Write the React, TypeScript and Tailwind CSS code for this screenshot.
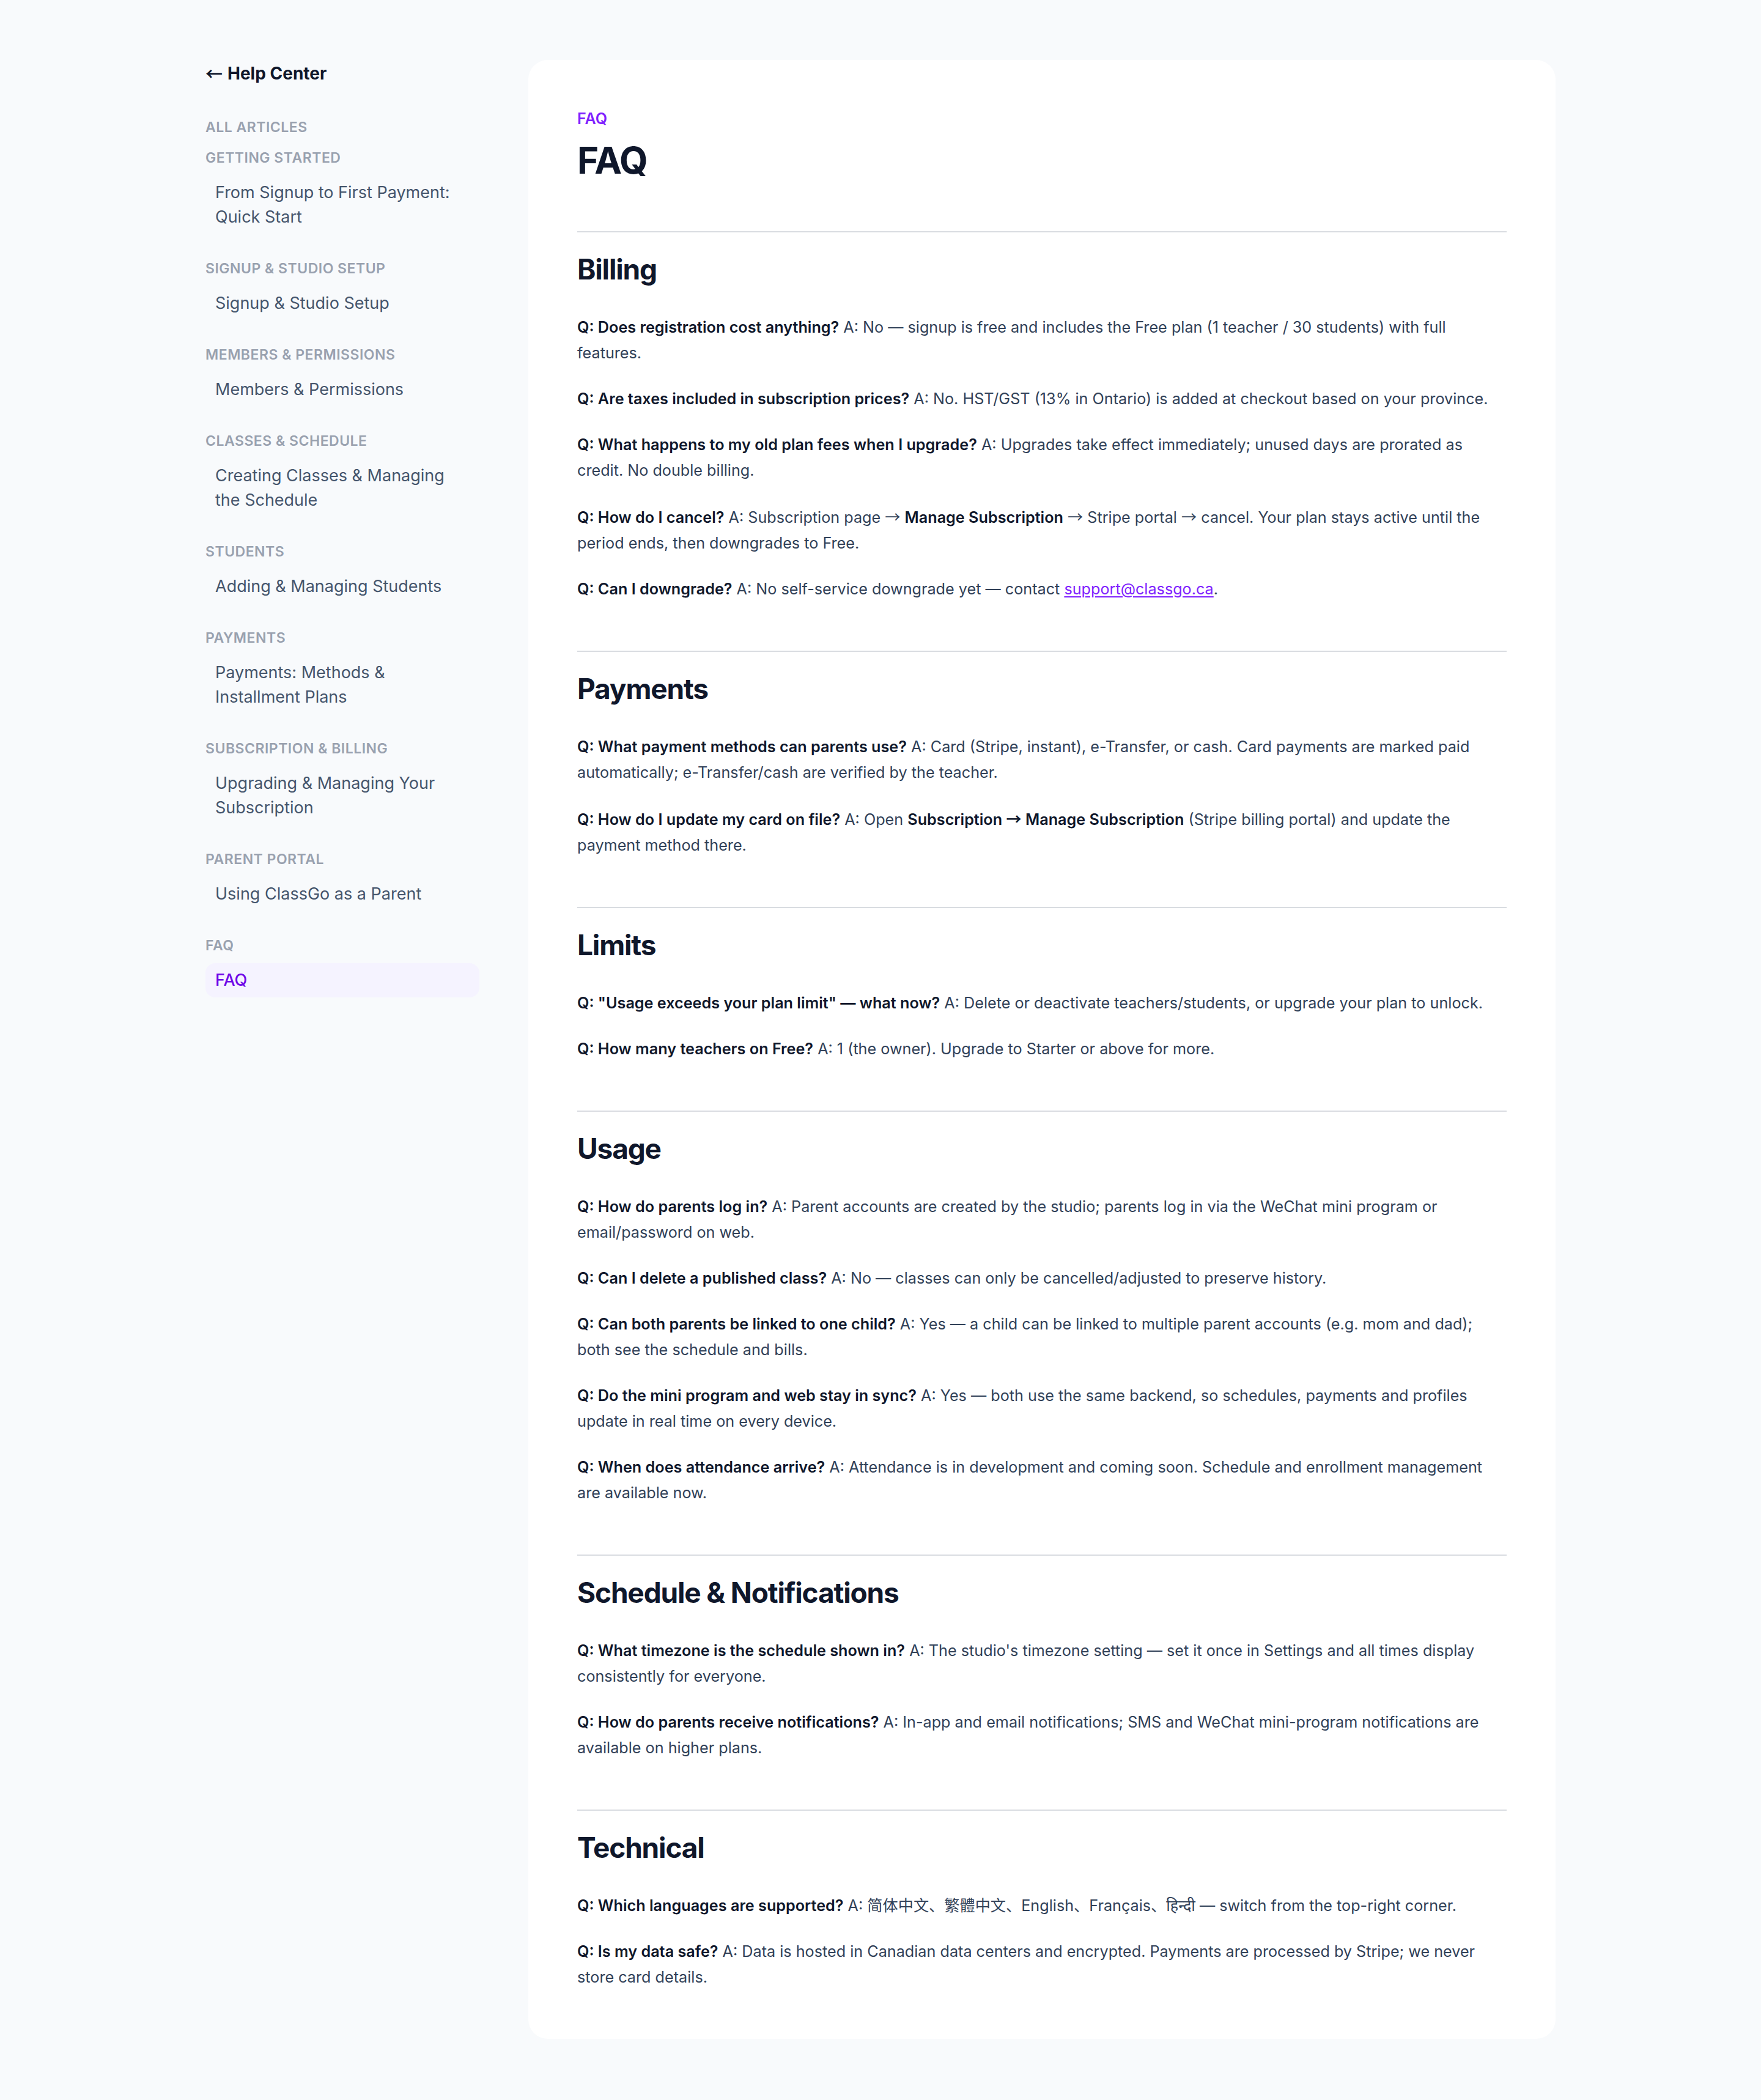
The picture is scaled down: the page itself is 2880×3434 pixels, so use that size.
import type { ReactNode } from 'react'

type Faq = { q: string; a: ReactNode }
type Section = { title: string; items: Faq[] }

const NAV = [
  { group: 'Getting Started', items: ['From Signup to First Payment: Quick Start'] },
  { group: 'Signup & Studio Setup', items: ['Signup & Studio Setup'] },
  { group: 'Members & Permissions', items: ['Members & Permissions'] },
  { group: 'Classes & Schedule', items: ['Creating Classes & Managing the Schedule'] },
  { group: 'Students', items: ['Adding & Managing Students'] },
  { group: 'Payments', items: ['Payments: Methods & Installment Plans'] },
  { group: 'Subscription & Billing', items: ['Upgrading & Managing Your Subscription'] },
  { group: 'Parent Portal', items: ['Using ClassGo as a Parent'] },
  { group: 'FAQ', items: ['FAQ'] },
]

const B = ({ children }: { children: ReactNode }) => (
  <strong className="font-semibold text-slate-900">{children}</strong>
)

// long thin arrow, as in the original
const Arrow = ({ left = false }: { left?: boolean }) => (
  <span className="font-['Noto_Sans_CJK_SC',sans-serif]">{left ? '←' : '→'}</span>
)

const SECTIONS: Section[] = [
  {
    title: 'Billing',
    items: [
      {
        q: 'Does registration cost anything?',
        a: 'No — signup is free and includes the Free plan (1 teacher / 30 students) with full features.',
      },
      {
        q: 'Are taxes included in subscription prices?',
        a: 'No. HST/GST (13% in Ontario) is added at checkout based on your province.',
      },
      {
        q: 'What happens to my old plan fees when I upgrade?',
        a: 'Upgrades take effect immediately; unused days are prorated as credit. No double billing.',
      },
      {
        q: 'How do I cancel?',
        a: (
          <>
            Subscription page <Arrow /> <B>Manage Subscription</B> <Arrow /> Stripe portal <Arrow /> cancel.
            Your plan stays active until the period ends, then downgrades to Free.
          </>
        ),
      },
      {
        q: 'Can I downgrade?',
        a: (
          <>
            No self-service downgrade yet — contact{' '}
            <a href="#" className="text-violet-600 underline underline-offset-[3px]">
              support@classgo.ca
            </a>
            .
          </>
        ),
      },
    ],
  },
  {
    title: 'Payments',
    items: [
      {
        q: 'What payment methods can parents use?',
        a: 'Card (Stripe, instant), e-Transfer, or cash. Card payments are marked paid automatically; e-Transfer/cash are verified by the teacher.',
      },
      {
        q: 'How do I update my card on file?',
        a: (
          <>
            Open{' '}
            <B>
              Subscription <Arrow /> Manage Subscription
            </B>{' '}
            (Stripe billing portal) and update the payment method there.
          </>
        ),
      },
    ],
  },
  {
    title: 'Limits',
    items: [
      {
        q: '"Usage exceeds your plan limit" — what now?',
        a: 'Delete or deactivate teachers/students, or upgrade your plan to unlock.',
      },
      {
        q: 'How many teachers on Free?',
        a: '1 (the owner). Upgrade to Starter or above for more.',
      },
    ],
  },
  {
    title: 'Usage',
    items: [
      {
        q: 'How do parents log in?',
        a: 'Parent accounts are created by the studio; parents log in via the WeChat mini program or email/password on web.',
      },
      {
        q: 'Can I delete a published class?',
        a: 'No — classes can only be cancelled/adjusted to preserve history.',
      },
      {
        q: 'Can both parents be linked to one child?',
        a: 'Yes — a child can be linked to multiple parent accounts (e.g. mom and dad); both see the schedule and bills.',
      },
      {
        q: 'Do the mini program and web stay in sync?',
        a: 'Yes — both use the same backend, so schedules, payments and profiles update in real time on every device.',
      },
      {
        q: 'When does attendance arrive?',
        a: 'Attendance is in development and coming soon. Schedule and enrollment management are available now.',
      },
    ],
  },
  {
    title: 'Schedule & Notifications',
    items: [
      {
        q: 'What timezone is the schedule shown in?',
        a: "The studio's timezone setting — set it once in Settings and all times display consistently for everyone.",
      },
      {
        q: 'How do parents receive notifications?',
        a: 'In-app and email notifications; SMS and WeChat mini-program notifications are available on higher plans.',
      },
    ],
  },
  {
    title: 'Technical',
    items: [
      {
        q: 'Which languages are supported?',
        a: '简体中文、繁體中文、English、Français、हिन्दी — switch from the top-right corner.',
      },
      {
        q: 'Is my data safe?',
        a: 'Data is hosted in Canadian data centers and encrypted. Payments are processed by Stripe; we never store card details.',
      },
    ],
  },
]

function Sidebar() {
  return (
    <aside className="w-[448px] shrink-0">
      <a href="#" className="flex items-center gap-2 text-[28px] leading-[48px] font-bold text-slate-900">
        <Arrow left />
        <span>Help Center</span>
      </a>

      <p className="mt-12 mb-[18px] text-[23px] leading-8 font-semibold uppercase tracking-[0.5px] text-gray-400">
        All Articles
      </p>

      <nav className="flex flex-col gap-10">
        {NAV.map((g) => (
          <div key={g.group}>
            <p className="mb-[13px] text-[23px] leading-8 font-semibold uppercase tracking-[0.5px] text-gray-400">
              {g.group}
            </p>
            {g.items.map((item) => {
              const active = item === 'FAQ'
              return (
                <a
                  key={item}
                  href="#"
                  className={`block rounded-2xl py-2 pl-4 pr-8 text-[27px] leading-10 ${
                    active ? 'bg-violet-50 font-medium text-violet-700' : 'text-slate-600'
                  }`}
                >
                  {item}
                </a>
              )
            })}
          </div>
        ))}
      </nav>
    </aside>
  )
}

export default function App() {
  return (
    <div className="min-h-screen bg-slate-50 font-['Inter','Noto_Sans','Noto_Sans_CJK_SC',sans-serif] text-slate-700">
      <div className="mx-auto flex max-w-[2304px] items-start gap-20 px-12 pt-24 pb-[100px]">
        <Sidebar />

        <main className="mt-0.5 min-w-0 flex-1 rounded-[32px] bg-white p-20">
          <p className="text-[25px] leading-8 font-semibold text-violet-600">FAQ</p>
          <h1 className="mt-4 text-[60px] leading-[72px] font-bold tracking-tight text-slate-900">FAQ</h1>

          {SECTIONS.map((s) => (
            <section key={s.title} className="mt-20 border-t-2 border-[#d9dce1] pt-8">
              <h2 className="mb-[46px] text-[46px] leading-[56px] font-bold tracking-tight text-slate-900">
                {s.title}
              </h2>
              <div className="flex flex-col gap-[33px]">
                {s.items.map((f) => (
                  <p key={f.q} className="text-[25.2px] leading-[42px]">
                    <B>Q: {f.q}</B> A: {f.a}
                  </p>
                ))}
              </div>
            </section>
          ))}
        </main>
      </div>
    </div>
  )
}
